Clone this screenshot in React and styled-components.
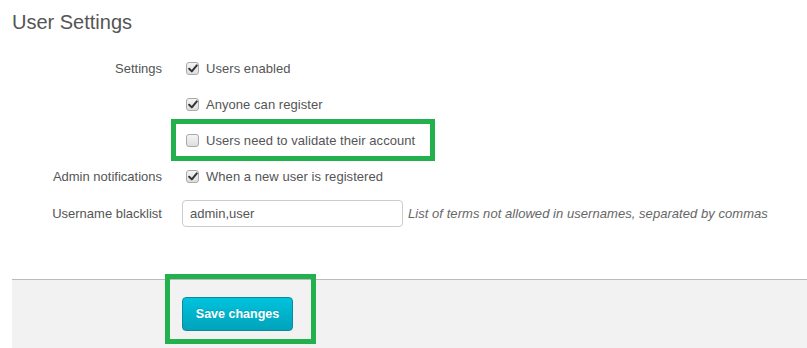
import React from 'react';
import styled, { createGlobalStyle } from 'styled-components';

const GlobalStyle = createGlobalStyle`
  html, body {
    margin: 0;
    padding: 0;
    background: #fff;
  }
  body {
    font-family: "Liberation Sans", Arial, sans-serif;
    font-size: 13px;
    color: #555;
  }
`;

const Page = styled.div`
  width: 807px;
  height: 348px;
  overflow: hidden;
  padding-left: 12px;
  box-sizing: border-box;
`;

const Title = styled.h2`
  margin: 0;
  padding-top: 10px;
  font-size: 20px;
  line-height: 24px;
  font-weight: normal;
  color: #555;
`;

const Form = styled.form`
  margin: 16px 0 0;
`;

const Row = styled.div`
  display: grid;
  grid-template-columns: 150px 1fr;
  column-gap: 20px;
  align-items: center;
  height: ${p => p.$height || 36}px;
`;

const Label = styled.label`
  text-align: right;
  color: #555;
  white-space: nowrap;
`;

const Control = styled.div`
  position: relative;
  display: flex;
  align-items: center;
  white-space: nowrap;
`;

const Check = styled.span`
  display: inline-flex;
  align-items: center;
  justify-content: center;
  box-sizing: border-box;
  width: 13px;
  height: 13px;
  margin: 0 7px 0 4px;
  border: 1px solid #a9a9a9;
  border-radius: 3px;
  background: linear-gradient(#f4f4f4, #dedede);
  flex: none;
`;

const CheckText = styled.span`
  color: #555;
  letter-spacing: 0.05px;
`;

const Highlight = styled.span`
  position: absolute;
  left: ${p => p.$left}px;
  top: ${p => p.$top}px;
  width: ${p => p.$width}px;
  height: ${p => p.$height}px;
  box-sizing: border-box;
  border: 5px solid #22b14c;
  pointer-events: none;
`;

const TextInput = styled.input`
  box-sizing: border-box;
  width: 221px;
  height: 27px;
  padding: 0 7px;
  border: 1px solid #ccc;
  border-radius: 4px;
  font-family: inherit;
  font-size: 13px;
  color: #555;
  outline: none;
`;

const Help = styled.span`
  margin-left: 5px;
  font-style: italic;
  color: #666;
  letter-spacing: 0.05px;
`;

const Footer = styled.div`
  margin-top: 47px;
  border-top: 1px solid #bbb;
  background: #f2f2f2;
  height: 80px;
  padding: 17px 0 0 170px;
  box-sizing: border-box;
`;

const ButtonWrap = styled.div`
  position: relative;
  display: inline-block;
`;

const SaveButton = styled.button`
  width: 111px;
  height: 34px;
  padding: 0;
  border: 1px solid #0b8a9c;
  border-radius: 4px;
  background: linear-gradient(#00c3de, #00a3ba);
  color: #fff;
  font-family: inherit;
  font-size: 12.5px;
  font-weight: bold;
  text-shadow: 0 -1px 0 rgba(0, 0, 0, 0.12);
  cursor: pointer;
`;

const Tick = () => (
  <svg width="10" height="9" viewBox="0 0 10 9">
    <path d="M1.2 4.8 L3.8 7.4 L8.8 1.4" fill="none" stroke="#333" strokeWidth="2" strokeLinecap="round" strokeLinejoin="round" />
  </svg>
);

const Checkbox = ({ checked, children }) => (
  <>
    <Check>{checked && <Tick />}</Check>
    <CheckText>{children}</CheckText>
  </>
);

const settings = [
  { label: 'Settings', text: 'Users enabled', checked: true },
  { label: '', text: 'Anyone can register', checked: true },
  { label: '', text: 'Users need to validate their account', checked: false, marked: true },
  { label: 'Admin notifications', text: 'When a new user is registered', checked: true },
];

export default function App() {
  return (
    <Page>
      <GlobalStyle />
      <Title>User Settings</Title>
      <Form onSubmit={e => e.preventDefault()}>
        {settings.map(s => (
          <Row key={s.text}>
            <Label>{s.label}</Label>
            <Control>
              <Checkbox checked={s.checked}>{s.text}</Checkbox>
              {s.marked && <Highlight $left={-11} $top={-14} $width={264} $height={42} />}
            </Control>
          </Row>
        ))}
        <Row $height={38}>
          <Label>Username blacklist</Label>
          <Control>
            <TextInput defaultValue="admin,user" />
            <Help>List of terms not allowed in usernames, separated by commas</Help>
          </Control>
        </Row>
      </Form>
      <Footer>
        <ButtonWrap>
          <SaveButton type="button">Save changes</SaveButton>
          <Highlight $left={-17} $top={-23} $width={151} $height={70} />
        </ButtonWrap>
      </Footer>
    </Page>
  );
}
